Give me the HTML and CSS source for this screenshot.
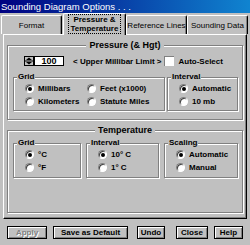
FILE: index.html
```html
<!DOCTYPE html>
<html>
<head>
<meta charset="utf-8">
<link rel="stylesheet" href="styles.css">
</head>
<body>
<div class="window">
  <div class="titlebar">Sounding Diagram Options . . .</div>
  <div class="tabs">
    <div class="tab t-format">Format</div>
    <div class="tab active"><span class="focus">Pressure &amp;<br>Temperature</span></div>
    <div class="tab t-ref">Reference Lines</div>
    <div class="tab t-snd">Sounding Data</div>
  </div>
  <div class="panel">
    <div class="group pressure">
      <div class="gtitle big">Pressure (&amp; Hgt)</div>
      <div class="limit-row">
        <span class="spin"><svg width="10" height="10" viewBox="0 0 10 10"><rect x="0.5" y="0.5" width="9" height="9" fill="#c0c0c0" stroke="#000"/><path d="M2 4 L5 1.5 L8 4Z M2 6 L5 8.5 L8 6Z" fill="#000"/><path d="M1 5 H9" stroke="#000" stroke-width="1"/></svg></span>
        <span class="numbox">100</span>
        <span class="limit">&lt; Upper Millibar Limit &gt;</span>
        <span class="check"></span>
        <span class="lbl">Auto-Select</span>
      </div>
      <div class="subrow p">
        <div class="sub grid1">
          <div class="gtitle">Grid</div>
          <div class="cols">
            <div class="col c1">
              <div class="opt"><span class="radio on"></span>Millibars</div>
              <div class="opt"><span class="radio"></span>Kilometers</div>
            </div>
            <div class="col">
              <div class="opt"><span class="radio"></span>Feet (x1000)</div>
              <div class="opt"><span class="radio"></span>Statute Miles</div>
            </div>
          </div>
        </div>
        <div class="sub int1">
          <div class="gtitle">Interval</div>
          <div class="opt"><span class="radio on"></span>Automatic</div>
          <div class="opt"><span class="radio"></span>10 mb</div>
        </div>
      </div>
    </div>
    <div class="group temp">
      <div class="gtitle big">Temperature</div>
      <div class="subrow t">
        <div class="sub g2">
          <div class="gtitle">Grid</div>
          <div class="opt"><span class="radio on"></span>°C</div>
          <div class="opt"><span class="radio"></span>°F</div>
        </div>
        <div class="sub i2">
          <div class="gtitle">Interval</div>
          <div class="opt"><span class="radio on"></span>10° C</div>
          <div class="opt"><span class="radio"></span>1° C</div>
        </div>
        <div class="sub s2">
          <div class="gtitle">Scaling</div>
          <div class="opt"><span class="radio on"></span>Automatic</div>
          <div class="opt"><span class="radio"></span>Manual</div>
        </div>
      </div>
    </div>
  </div>
  <div class="buttons">
    <div class="btn disabled apply">Apply</div>
    <div class="btn save">Save as Default</div>
    <div class="btn undo">Undo</div>
    <div class="btn close">Close</div>
    <div class="btn help">Help</div>
  </div>
</div>
</body>
</html>
```
FILE: styles.css
```css
* { box-sizing: border-box; }
html, body { margin: 0; padding: 0; }
body {
  width: 250px;
  height: 245px;
  overflow: hidden;
  font-family: "Liberation Sans", Arial, sans-serif;
  font-size: 8px;
  font-weight: bold;
  color: #000;
}
.window {
  width: 250px;
  height: 245px;
  background: #c0c0c0;
  display: flex;
  flex-direction: column;
}
.titlebar {
  height: 13px;
  background: linear-gradient(to right, #000080, #1084d0);
  color: #fff;
  font-weight: normal;
  font-size: 9.5px;
  line-height: 13px;
  padding-left: 1px;
  white-space: nowrap;
}
.tabs {
  display: flex;
  height: 21px;
  align-items: flex-end;
  padding-left: 1px;
  position: relative;
  z-index: 1;
}
.tab {
  height: 19px;
  border-top: 1px solid #fff;
  border-left: 1px solid #fff;
  border-right: 1px solid #000;
  border-radius: 2px 2px 0 0;
  box-shadow: inset -1px 0 0 #808080;
  display: flex;
  align-items: center;
  justify-content: center;
  font-weight: normal;
  white-space: nowrap;
}
.t-format { width: 61px; }
.t-ref { width: 61px; }
.t-snd { width: 61px; }
.tab.active {
  width: 63px;
  margin-left: 1px;
  height: 22px;
  margin-bottom: -1px;
  background: #c0c0c0;
  font-weight: bold;
  line-height: 9px;
  text-align: center;
  padding-bottom: 1px;
}
.focus {
  border: 1px dotted #000;
  padding: 0 2px;
}
.panel {
  margin: 0 3px;
  height: 185px;
  border-top: 1px solid #fff;
  border-left: 1px solid #fff;
  border-right: 1px solid #000;
  border-bottom: 1px solid #000;
  box-shadow: inset -1px -1px 0 #808080;
  padding: 10px 2px 0 3px;
}
.group, .sub {
  border: 1px solid #808080;
  box-shadow: 1px 1px 0 #fff, inset 1px 1px 0 #fff;
}
.gtitle {
  width: fit-content;
  margin-top: -6px;
  margin-left: 3px;
  padding: 0 1px;
  background: #c0c0c0;
  line-height: 10px;
  height: 10px;
  white-space: nowrap;
}
.gtitle.big {
  margin-left: auto;
  margin-right: auto;
  padding: 0 3px;
  font-size: 9px;
}
.group.pressure {
  height: 75px;
  margin-right: 1px;
}
.group.temp {
  margin-top: 10px;
  margin-right: 1px;
  height: 83px;
}
.limit-row {
  display: flex;
  align-items: center;
  height: 10px;
  margin-top: 6px;
  padding-left: 16px;
  white-space: nowrap;
}
.spin { display: flex; width: 10px; height: 10px; flex: none; }
.numbox {
  flex: none;
  width: 30px;
  height: 10px;
  background: #fff;
  border: 1px solid #000;
  line-height: 8px;
  text-align: center;
  font-size: 9px;
}
.limit { margin-left: 9px; flex: none; }
.check {
  flex: none;
  width: 10px;
  height: 10px;
  background: #fff;
  border-top: 1px solid #808080;
  border-left: 1px solid #808080;
  margin-left: 3px;
}
.lbl { margin-left: 4px; flex: none; }
.subrow {
  display: flex;
  padding-left: 5px;
}
.subrow.p { margin-top: 11px; gap: 2px; }
.grid1 { width: 152px; height: 34px; }
.int1 { width: 71px; height: 34px; }
.cols { display: flex; }
.c1 { width: 62px; }
.opt {
  display: flex;
  align-items: center;
  height: 13px;
  padding-left: 11px;
  white-space: nowrap;
}
.radio {
  width: 9px;
  height: 9px;
  border-radius: 50%;
  background: #fff;
  border: 1px solid #808080;
  border-right-color: #fff;
  border-bottom-color: #fff;
  box-shadow: inset 1px 1px 0 #404040;
  margin-right: 4px;
  position: relative;
  flex: none;
}
.radio.on::after {
  content: "";
  position: absolute;
  left: 2px;
  top: 2px;
  width: 4px;
  height: 4px;
  border-radius: 50%;
  background: #000;
}
.subrow.t { margin-top: 8px; }
.g2 { width: 68px; height: 35px; }
.i2 { width: 73px; height: 35px; margin-left: 5px; }
.s2 { width: 74px; height: 35px; margin-left: 5px; }
.buttons {
  display: flex;
  align-items: center;
  padding: 7px 0 0 7px;
}
.btn {
  height: 13px;
  border: 1px solid #000;
  box-shadow: inset 1px 1px 0 #fff, inset -1px -1px 0 #808080;
  display: flex;
  align-items: center;
  justify-content: center;
  white-space: nowrap;
}
.btn.disabled { color: #808080; text-shadow: 1px 1px 0 #fff; }
.apply { width: 40px; }
.save { width: 75px; margin-left: 6px; }
.undo { width: 28px; margin-left: 9px; }
.close { width: 32px; margin-left: 11px; }
.help { width: 29px; margin-left: 6px; }
```
